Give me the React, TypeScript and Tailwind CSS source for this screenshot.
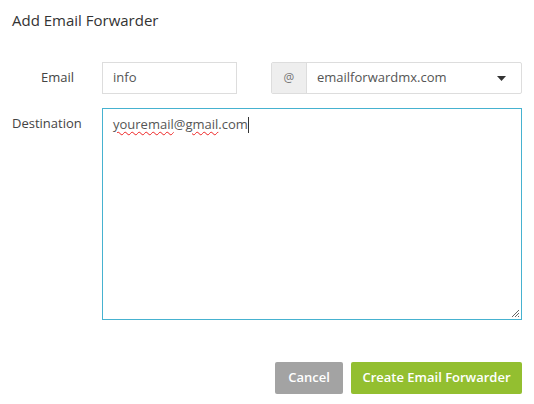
import React from 'react';

const font = { fontFamily: '"Open Sans", Lato, "Liberation Sans", sans-serif' };

export default function App() {
  return (
    <div className="w-[534px] h-[404px] bg-white text-[#333]" style={font}>
      <div className="px-[12px] pt-[11px]">
        <h2 className="text-[15px] leading-[18px] text-[#333]">Add Email Forwarder</h2>

        <div className="mt-[33px] flex flex-col gap-[14px]">
          {/* Email row */}
          <div className="flex items-center">
            <label className="w-[90px] pr-[28px] text-right text-[13px] text-[#444]">Email</label>
            <div className="w-[135px] h-[32px] border border-[#ddd] flex items-center px-[10px] text-[13px] text-[#555]">
              info
            </div>
            <div className="ml-[34px] flex h-[32px] w-[251px] border border-[#ddd] rounded-[2px]">
              <div className="w-[35px] bg-[#eee] border-r border-[#ddd] flex items-center justify-center text-[12px] text-[#777]">
                @
              </div>
              <div className="flex-1 flex items-center justify-between pl-[10px] pr-[15px] text-[13px] text-[#555]">
                <span>emailforwardmx.com</span>
                <svg width="9" height="5" viewBox="0 0 9 5">
                  <path d="M0 0 L9 0 L4.5 5 Z" fill="#333" />
                </svg>
              </div>
            </div>
          </div>

          {/* Destination row */}
          <div className="flex items-start">
            <label className="w-[90px] pt-[6px] text-[13px] text-[#444]">Destination</label>
            <div className="relative w-[420px] h-[212px] border border-[#46b2d0] px-[10px] pt-[6px] text-[13px] text-[#555]">
              <span className="underline decoration-wavy decoration-[#e22] decoration-1 underline-offset-2">youremail</span>
              <span>@</span>
              <span className="underline decoration-wavy decoration-[#e22] decoration-1 underline-offset-2">gmail</span>
              <span>.com</span>
              <span className="inline-block w-px h-[16px] bg-[#333] align-[-4px]" />
              <svg className="absolute right-[1px] bottom-[1px]" width="9" height="9" viewBox="0 0 9 9">
                <path d="M8 1 L1 8 M8 4 L4 8 M8 7 L7 8" stroke="#666" strokeWidth="1" />
              </svg>
            </div>
          </div>
        </div>

        <div className="mt-[42px] flex justify-end gap-[8px]">
          <button className="h-[32px] w-[68px] rounded-[2px] bg-[#a3a3a3] text-white text-[13px] font-semibold">
            Cancel
          </button>
          <button className="h-[32px] w-[171px] rounded-[2px] bg-[#93bf30] text-white text-[13px] font-semibold">
            Create Email Forwarder
          </button>
        </div>
      </div>
    </div>
  );
}
